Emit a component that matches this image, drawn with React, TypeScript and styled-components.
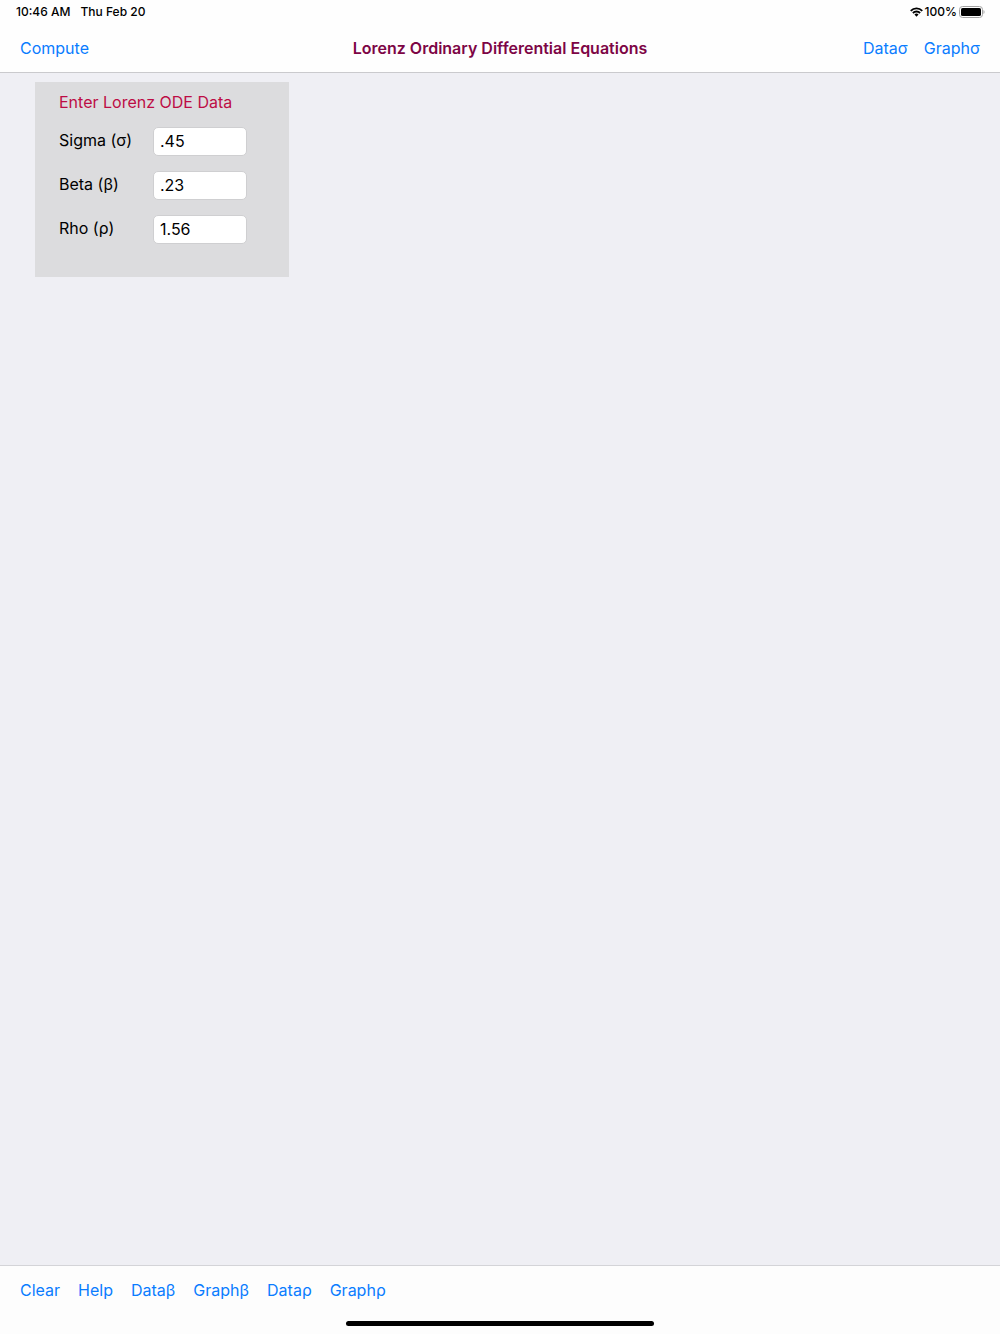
import React, { useState } from "react";
import styled, { createGlobalStyle } from "styled-components";

const GlobalStyle = createGlobalStyle`
  * { box-sizing: border-box; }
  body {
    margin: 0;
    background: #efeff4;
    color: #000;
    font-family: Inter, "Liberation Sans", sans-serif;
  }
`;

const Screen = styled.div`
  display: flex;
  flex-direction: column;
  min-height: 100vh;
`;

const Header = styled.header`
  background: #fefefe;
  border-bottom: 1px solid #cacacd;
`;

const StatusBar = styled.div`
  display: flex;
  align-items: center;
  justify-content: space-between;
  height: 24px;
  padding: 0 15px 0 16px;
  font-size: 12px;
  line-height: 16px;
  font-weight: 500;
`;

const StatusGroup = styled.div<{ $gap: number }>`
  display: flex;
  align-items: center;
  gap: ${(p) => p.$gap}px;
`;

const NavBar = styled.nav`
  display: grid;
  grid-template-columns: 1fr auto 1fr;
  align-items: center;
  height: 48px;
  padding: 0 20px;
`;

const Title = styled.h1`
  margin: 0;
  color: #7d0545;
  font-size: 16px;
  line-height: 20px;
  font-weight: 600;
`;

const Actions = styled.div<{ $gap: number; $end?: boolean }>`
  display: flex;
  gap: ${(p) => p.$gap}px;
  justify-content: ${(p) => (p.$end ? "flex-end" : "flex-start")};
`;

const BarButton = styled.button`
  padding: 0;
  border: 0;
  background: none;
  color: #0a7cff;
  font: inherit;
  font-size: 16px;
  line-height: 20px;
  cursor: pointer;
`;

const Content = styled.main`
  flex: 1;
  padding: 9px 35px;
`;

const Panel = styled.form`
  width: 254px;
  padding: 10px 24px 33px;
  background: #dcdcde;
`;

const PanelTitle = styled.h2`
  margin: 0 0 15px;
  color: #bd0c45;
  font-size: 16px;
  line-height: 20px;
  font-weight: 400;
`;

const Fields = styled.div`
  display: grid;
  gap: 15px;
`;

const Field = styled.div`
  display: grid;
  grid-template-columns: 94px 94px;
`;

const FieldLabel = styled.label`
  font-size: 16px;
  line-height: 26px;
`;

const FieldInput = styled.input`
  width: 100%;
  height: 29px;
  padding: 0 6px 2px;
  border: 1px solid #cfcfd1;
  border-radius: 5px;
  background: #fff;
  color: #000;
  font: inherit;
  font-size: 16px;
`;

const Footer = styled.footer`
  display: flex;
  flex-direction: column;
  justify-content: space-between;
  height: 69px;
  padding: 14px 20px 8px;
  border-top: 1px solid #d4d4d8;
  background: #fdfdfd;
`;

const HomeIndicator = styled.div`
  align-self: center;
  width: 32%;
  height: 5px;
  border-radius: 3px;
  background: #000;
`;

const WifiIcon = () => (
  <svg width="13" height="10" viewBox="0 0 14 10" aria-hidden="true">
    <g fill="none" stroke="#000" strokeWidth="2">
      <path d="M.8 3.7a8.8 8.8 0 0 1 12.4 0" />
      <path d="M3.1 6.1a5.5 5.5 0 0 1 7.8 0" />
    </g>
    <path d="M7 10 4.8 7.8a3.1 3.1 0 0 1 4.4 0z" />
  </svg>
);

const BatteryIcon = () => (
  <svg width="26" height="12" viewBox="0 0 26 12" aria-hidden="true">
    <rect x=".5" y=".5" width="23" height="11" rx="3" fill="none" stroke="#a2a2a2" />
    <rect x="2" y="2" width="20" height="8" rx="1.6" />
    <path d="M24.5 4v4c1.4-.6 1.4-3.4 0-4z" fill="#a2a2a2" />
  </svg>
);

const parameters = [
  { id: "sigma", label: "Sigma (σ)", value: ".45" },
  { id: "beta", label: "Beta (β)", value: ".23" },
  { id: "rho", label: "Rho (ρ)", value: "1.56" },
];

const footerActions = ["Clear", "Help", "Dataβ", "Graphβ", "Dataρ", "Graphρ"];

export default function App() {
  const [values, setValues] = useState<Record<string, string>>(
    Object.fromEntries(parameters.map((p) => [p.id, p.value]))
  );

  return (
    <>
      <GlobalStyle />
      <Screen>
        <Header>
          <StatusBar>
            <StatusGroup $gap={10}>
              <span>10:46 AM</span>
              <span>Thu Feb 20</span>
            </StatusGroup>
            <StatusGroup $gap={2}>
              <WifiIcon />
              <span>100%</span>
              <BatteryIcon />
            </StatusGroup>
          </StatusBar>
          <NavBar>
            <Actions $gap={16}>
              <BarButton type="button">Compute</BarButton>
            </Actions>
            <Title>Lorenz Ordinary Differential Equations</Title>
            <Actions $gap={16} $end>
              <BarButton type="button">Dataσ</BarButton>
              <BarButton type="button">Graphσ</BarButton>
            </Actions>
          </NavBar>
        </Header>
        <Content>
          <Panel onSubmit={(e) => e.preventDefault()}>
            <PanelTitle>Enter Lorenz ODE Data</PanelTitle>
            <Fields>
              {parameters.map((p) => (
                <Field key={p.id}>
                  <FieldLabel htmlFor={p.id}>{p.label}</FieldLabel>
                  <FieldInput
                    id={p.id}
                    value={values[p.id]}
                    onChange={(e) => setValues({ ...values, [p.id]: e.target.value })}
                  />
                </Field>
              ))}
            </Fields>
          </Panel>
        </Content>
        <Footer>
          <Actions $gap={18}>
            {footerActions.map((name) => (
              <BarButton key={name} type="button">{name}</BarButton>
            ))}
          </Actions>
          <HomeIndicator />
        </Footer>
      </Screen>
    </>
  );
}
